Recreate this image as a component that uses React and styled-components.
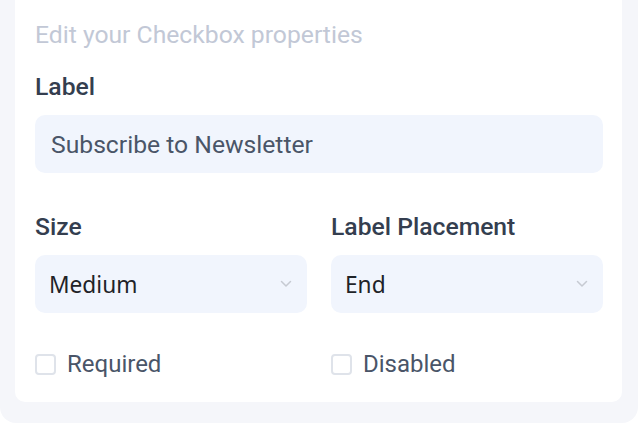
import React from "react";
import styled, { createGlobalStyle } from "styled-components";

const Global = createGlobalStyle`
  html, body { margin: 0; padding: 0; background: #ffffff; }
  body { font-family: Roboto, "Noto Sans", sans-serif; }
`;

const Panel = styled.div`
  width: 638px;
  height: 423px;
  box-sizing: border-box;
  background: #f5f6fa;
  border-radius: 0 0 16px 16px;
  padding: 0 16px 21px 15px;
  display: flex;
`;

const Card = styled.div`
  flex: 1;
  background: #ffffff;
  border-radius: 0 0 10px 10px;
  padding: 21px 19px 0 20px;
  display: flex;
  flex-direction: column;
`;

const Subtitle = styled.div`
  font-size: 24.7px;
  line-height: 28px;
  color: #c2c8d6;
  margin-bottom: 24px;
`;

const FieldLabel = styled.div`
  font-size: 24.7px;
  line-height: 28px;
  font-weight: 500;
  color: #343e4f;
  margin-bottom: 14px;
`;

const TextInput = styled.div`
  height: 58px;
  box-sizing: border-box;
  background: #f1f5fd;
  border-radius: 10px;
  padding: 0 16px;
  display: flex;
  align-items: center;
  font-size: 24.7px;
  color: #4a5568;
`;

const Grid = styled.div`
  display: grid;
  grid-template-columns: 1fr 1fr;
  column-gap: 24px;
  margin-top: 40px;
`;

const Field = styled.div`
  display: flex;
  flex-direction: column;
`;

const Select = styled.div`
  height: 58px;
  box-sizing: border-box;
  background: #f1f5fd;
  border-radius: 10px;
  padding: 0 15px 0 14px;
  display: flex;
  align-items: center;
  justify-content: space-between;
  font-family: "Noto Sans", "Open Sans", sans-serif;
  font-size: 22.7px;
  color: #1f2328;
`;

const Chevron = () => (
  <svg width="12" height="8" viewBox="0 0 12 8" fill="none">
    <path d="M1.5 1.5l4.5 4.5 4.5-4.5" stroke="#c6cad2" strokeWidth="1.5" strokeLinecap="round" strokeLinejoin="round" />
  </svg>
);

const CheckRow = styled.div`
  display: grid;
  grid-template-columns: 1fr 1fr;
  column-gap: 24px;
  margin-top: 37px;
`;

const Check = styled.label`
  display: flex;
  align-items: center;
  gap: 11px;
  font-size: 24px;
  line-height: 28px;
  color: #4a5568;
`;

const Box = styled.span`
  width: 21px;
  height: 21px;
  box-sizing: border-box;
  border: 2px solid #dfe3ea;
  border-radius: 4px;
  background: #fff;
`;

export default function App() {
  return (
    <>
      <Global />
      <Panel>
        <Card>
          <Subtitle>Edit your Checkbox properties</Subtitle>
          <FieldLabel>Label</FieldLabel>
          <TextInput>Subscribe to Newsletter</TextInput>
          <Grid>
            <Field>
              <FieldLabel>Size</FieldLabel>
              <Select>
                <span>Medium</span>
                <Chevron />
              </Select>
            </Field>
            <Field>
              <FieldLabel>Label Placement</FieldLabel>
              <Select>
                <span>End</span>
                <Chevron />
              </Select>
            </Field>
          </Grid>
          <CheckRow>
            <Check><Box />Required</Check>
            <Check><Box />Disabled</Check>
          </CheckRow>
        </Card>
      </Panel>
    </>
  );
}
